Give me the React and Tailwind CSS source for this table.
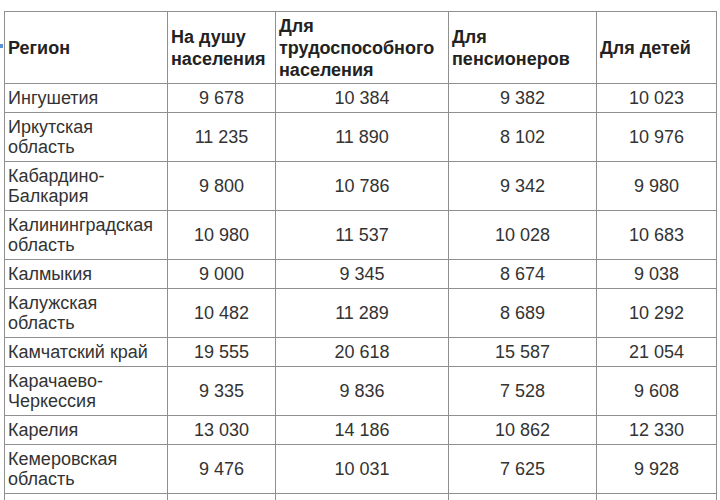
const COLUMNS = ['Регион', 'На душу населения', 'Для трудоспособного населения', 'Для пенсионеров', 'Для детей']

const ROWS = [
  ['Ингушетия', '9 678', '10 384', '9 382', '10 023'],
  ['Иркутская область', '11 235', '11 890', '8 102', '10 976'],
  ['Кабардино-Балкария', '9 800', '10 786', '9 342', '9 980'],
  ['Калининградская область', '10 980', '11 537', '10 028', '10 683'],
  ['Калмыкия', '9 000', '9 345', '8 674', '9 038'],
  ['Калужская область', '10 482', '11 289', '8 689', '10 292'],
  ['Камчатский край', '19 555', '20 618', '15 587', '21 054'],
  ['Карачаево-Черкессия', '9 335', '9 836', '7 528', '9 608'],
  ['Карелия', '13 030', '14 186', '10 862', '12 330'],
  ['Кемеровская область', '9 476', '10 031', '7 625', '9 928'],
]

const WIDTHS = ['w-[163px]', 'w-[108px]', 'w-[173px]', 'w-[148px]', 'w-[120px]']

export default function App() {
  return (
    <div className="relative h-[500px] w-[720px] overflow-hidden bg-white pl-[4px] pt-[11px] font-['Liberation_Sans',Arial,sans-serif]">
      {/* stray selection mark left of the header */}
      <span className="absolute left-0 top-[44px] h-[4px] w-[3px] bg-[#5b8fd6]" />
      <table className="w-[713px] table-fixed border-collapse border border-[#5a5a5a]">
        <thead>
          <tr>
            {COLUMNS.map((c, i) => (
              <th
                key={c}
                className={`${WIDTHS[i]} border border-[#8f8f8f] px-[3px] pt-[3px] pb-[2px] text-left align-middle text-[18px] font-bold leading-[22px] text-[#222]`}
              >
                {c}
              </th>
            ))}
          </tr>
        </thead>
        <tbody>
          {ROWS.map(r => (
            <tr key={r[0]}>
              {r.map((v, i) => (
                <td
                  key={i}
                  className={`border border-[#8f8f8f] px-[3px] py-[4px] align-middle text-[18px] leading-[20px] text-[#333] ${i === 0 ? 'text-left' : 'text-center'}`}
                >
                  {v}
                </td>
              ))}
            </tr>
          ))}
          {/* next row, cut off by the window edge */}
          <tr>
            {COLUMNS.map(c => (
              <td key={c} className="h-[30px] border border-[#8f8f8f]" />
            ))}
          </tr>
        </tbody>
      </table>
    </div>
  )
}
